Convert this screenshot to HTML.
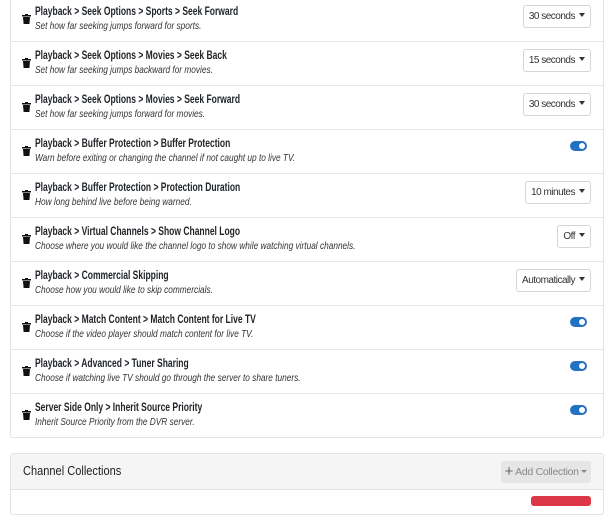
<!DOCTYPE html><html><head><style>
body{margin:0;background:#fff;font-family:"Liberation Sans",sans-serif;color:#212529;width:614px;height:499px;overflow:hidden;position:relative}
.card{position:absolute;left:10px;width:592px;border:1px solid #e3e3e3;border-radius:3px;background:#fff}
.row{position:relative;height:43px;border-bottom:1px solid #e6e6e6}
.row:last-child{border-bottom:none}
.t{position:absolute;left:24px;top:8px;font-size:11.5px;font-weight:bold;color:#212529;transform:scaleX(0.74);transform-origin:0 0;white-space:nowrap}
.d{position:absolute;left:24px;top:22px;font-size:10.5px;font-style:italic;color:#333;transform:scaleX(0.79);transform-origin:0 0;white-space:nowrap}
.tr{position:absolute;left:11px;top:16px;width:9px;height:10px}
.dd{position:absolute;right:12px;top:7px;height:21px;border:1px solid #d5d5d5;border-radius:3px;font-size:10px;line-height:21px;padding:0 5px;color:#333;background:#fff;letter-spacing:-0.5px}
.dd:after{content:"";display:inline-block;margin-left:4px;vertical-align:2px;border-left:3px solid transparent;border-right:3px solid transparent;border-top:4px solid #333}
.tg{position:absolute;right:16px;top:11px;width:17px;height:10px;border-radius:5px;background:#2272c3}
.tg:after{content:"";position:absolute;right:2px;top:2px;width:6px;height:6px;border-radius:50%;background:#fff}
</style></head><body>
<div class="card" style="top:-3px">
<div class="row"><svg class="tr" viewBox="0 0 9 10"><rect x="0" y="1" width="9" height="1.5" fill="#111"/><rect x="3" y="0" width="3" height="1.5" fill="#111"/><path d="M1 3h7l-.6 7h-5.8z" fill="#111"/></svg><div class="t">Playback &gt; Seek Options &gt; Sports &gt; Seek Forward</div><div class="d">Set how far seeking jumps forward for sports.</div><div class="dd">30 seconds</div></div>
<div class="row"><svg class="tr" viewBox="0 0 9 10"><rect x="0" y="1" width="9" height="1.5" fill="#111"/><rect x="3" y="0" width="3" height="1.5" fill="#111"/><path d="M1 3h7l-.6 7h-5.8z" fill="#111"/></svg><div class="t">Playback &gt; Seek Options &gt; Movies &gt; Seek Back</div><div class="d">Set how far seeking jumps backward for movies.</div><div class="dd">15 seconds</div></div>
<div class="row"><svg class="tr" viewBox="0 0 9 10"><rect x="0" y="1" width="9" height="1.5" fill="#111"/><rect x="3" y="0" width="3" height="1.5" fill="#111"/><path d="M1 3h7l-.6 7h-5.8z" fill="#111"/></svg><div class="t">Playback &gt; Seek Options &gt; Movies &gt; Seek Forward</div><div class="d">Set how far seeking jumps forward for movies.</div><div class="dd">30 seconds</div></div>
<div class="row"><svg class="tr" viewBox="0 0 9 10"><rect x="0" y="1" width="9" height="1.5" fill="#111"/><rect x="3" y="0" width="3" height="1.5" fill="#111"/><path d="M1 3h7l-.6 7h-5.8z" fill="#111"/></svg><div class="t">Playback &gt; Buffer Protection &gt; Buffer Protection</div><div class="d">Warn before exiting or changing the channel if not caught up to live TV.</div><div class="tg"></div></div>
<div class="row"><svg class="tr" viewBox="0 0 9 10"><rect x="0" y="1" width="9" height="1.5" fill="#111"/><rect x="3" y="0" width="3" height="1.5" fill="#111"/><path d="M1 3h7l-.6 7h-5.8z" fill="#111"/></svg><div class="t">Playback &gt; Buffer Protection &gt; Protection Duration</div><div class="d">How long behind live before being warned.</div><div class="dd">10 minutes</div></div>
<div class="row"><svg class="tr" viewBox="0 0 9 10"><rect x="0" y="1" width="9" height="1.5" fill="#111"/><rect x="3" y="0" width="3" height="1.5" fill="#111"/><path d="M1 3h7l-.6 7h-5.8z" fill="#111"/></svg><div class="t">Playback &gt; Virtual Channels &gt; Show Channel Logo</div><div class="d">Choose where you would like the channel logo to show while watching virtual channels.</div><div class="dd">Off</div></div>
<div class="row"><svg class="tr" viewBox="0 0 9 10"><rect x="0" y="1" width="9" height="1.5" fill="#111"/><rect x="3" y="0" width="3" height="1.5" fill="#111"/><path d="M1 3h7l-.6 7h-5.8z" fill="#111"/></svg><div class="t">Playback &gt; Commercial Skipping</div><div class="d">Choose how you would like to skip commercials.</div><div class="dd">Automatically</div></div>
<div class="row"><svg class="tr" viewBox="0 0 9 10"><rect x="0" y="1" width="9" height="1.5" fill="#111"/><rect x="3" y="0" width="3" height="1.5" fill="#111"/><path d="M1 3h7l-.6 7h-5.8z" fill="#111"/></svg><div class="t">Playback &gt; Match Content &gt; Match Content for Live TV</div><div class="d">Choose if the video player should match content for live TV.</div><div class="tg"></div></div>
<div class="row"><svg class="tr" viewBox="0 0 9 10"><rect x="0" y="1" width="9" height="1.5" fill="#111"/><rect x="3" y="0" width="3" height="1.5" fill="#111"/><path d="M1 3h7l-.6 7h-5.8z" fill="#111"/></svg><div class="t">Playback &gt; Advanced &gt; Tuner Sharing</div><div class="d">Choose if watching live TV should go through the server to share tuners.</div><div class="tg"></div></div>
<div class="row"><svg class="tr" viewBox="0 0 9 10"><rect x="0" y="1" width="9" height="1.5" fill="#111"/><rect x="3" y="0" width="3" height="1.5" fill="#111"/><path d="M1 3h7l-.6 7h-5.8z" fill="#111"/></svg><div class="t">Server Side Only &gt; Inherit Source Priority</div><div class="d">Inherit Source Priority from the DVR server.</div><div class="tg"></div></div>
</div>
<div class="card" style="top:453px;height:60px">
<div style="height:35px;background:#f5f5f5;border-bottom:1px solid #e3e3e3;position:relative">
<div style="position:absolute;left:12px;top:9px;font-size:13px;color:#222;transform:scaleX(0.85);transform-origin:0 0;white-space:nowrap">Channel Collections</div>
<div style="position:absolute;right:12px;top:7px;height:22px;width:90px;background:#e6e6e6;border-radius:3px;font-size:10.5px;line-height:22px;color:#888;text-align:center;letter-spacing:-0.3px"><span style="font-size:15px;color:#666;vertical-align:-1px">+</span> Add Collection <span style="display:inline-block;vertical-align:2px;border-left:3px solid transparent;border-right:3px solid transparent;border-top:3px solid #888"></span></div>
</div>
<div style="position:absolute;right:12px;top:42px;width:60px;height:10px;background:#dc3545;border-radius:3px"></div>
</div>
</body></html>
